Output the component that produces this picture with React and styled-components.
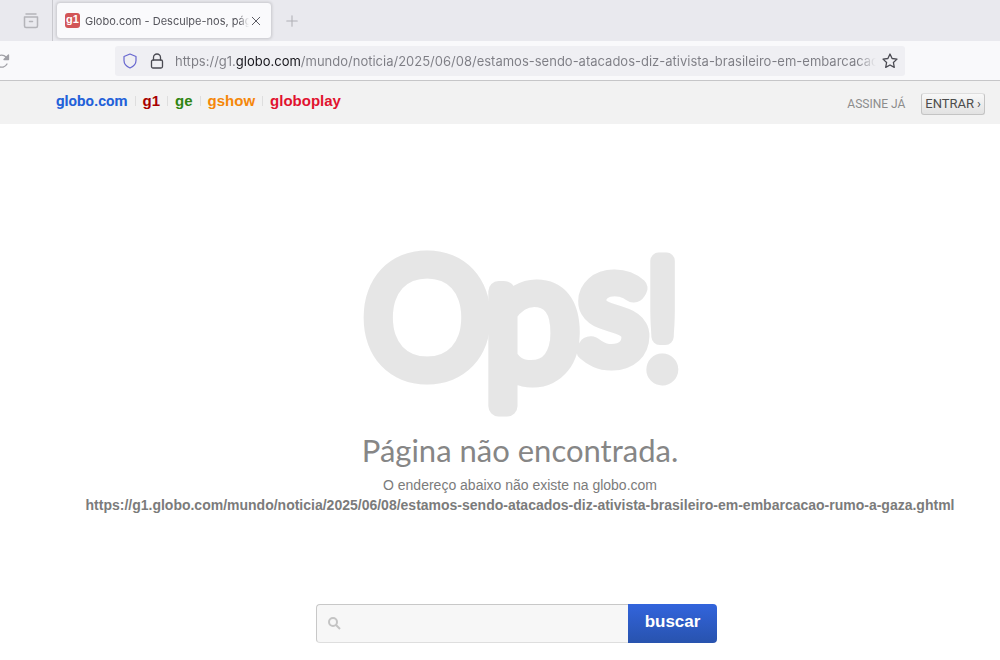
import React, { useState } from "react";
import styled, { createGlobalStyle } from "styled-components";

const GlobalStyle = createGlobalStyle`
  * {
    box-sizing: border-box;
  }
  body {
    margin: 0;
    background: #fff;
    font-family: "Liberation Sans", Arial, sans-serif;
  }
  h1, p {
    margin: 0;
  }
  svg {
    display: block;
    flex-shrink: 0;
    overflow: visible;
  }
`;

const TabStrip = styled.div`
  display: flex;
  align-items: stretch;
  height: 41px;
  background: #e9e9ee;
`;

const IconButton = styled.button`
  display: flex;
  align-items: center;
  justify-content: center;
  flex-shrink: 0;
  width: ${({ $width }) => $width || 24}px;
  padding: 0;
  border: none;
  background: none;
  color: ${({ $color }) => $color || "#4a4a52"};
`;

const RecentTabs = styled.div`
  display: flex;
  justify-content: flex-end;
  width: 53px;
  padding-right: 9px;
  border-right: 1px solid #c9c9ce;
`;

const Tab = styled.div`
  display: flex;
  align-items: center;
  width: 216px;
  height: 37px;
  margin: 2px 8px 0 3px;
  padding: 0 8px;
  background: #fafafc;
  border: 1px solid #d3d3d8;
  border-radius: 4px;
  box-shadow: 0 0 3px rgba(0, 0, 0, 0.15);
`;

const Favicon = styled.span`
  width: 15px;
  height: 15px;
  flex-shrink: 0;
  border-radius: 3px;
  background: #d25557;
  color: #fff;
  font: bold 11px/13px "Liberation Sans", Arial, sans-serif;
  text-align: center;
`;

const TabTitle = styled.span`
  flex: 1;
  margin-left: 5px;
  overflow: hidden;
  white-space: nowrap;
  color: #55555c;
  font: 11px/16px Inter, sans-serif;
  mask-image: linear-gradient(to left, transparent, #000 10px);
`;

const Toolbar = styled.div`
  display: flex;
  align-items: center;
  height: 40px;
  padding-right: 95px;
  background: #f9f9fb;
  border-bottom: 1px solid #c6c6c8;
`;

const ReloadWrap = styled.div`
  display: flex;
  width: 115px;
  overflow: hidden;
`;

const AddressBar = styled.div`
  display: flex;
  align-items: center;
  flex: 1;
  height: 30px;
  padding: 0 3px;
  border-radius: 3px;
  background: #efeff3;
`;

// the host is darker than the rest of the address, the end fades out
const AddressInput = styled.input`
  flex: 1;
  min-width: 0;
  height: 24px;
  margin: 0 2px 0 3px;
  padding: 0;
  border: none;
  outline: none;
  font: 13px/24px Inter, sans-serif;
  color: transparent;
  background: linear-gradient(
    to right,
    #7d7d84 61px,
    #15141a 61px,
    #15141a 125px,
    #7d7d84 125px,
    #7d7d84 calc(100% - 18px),
    transparent
  );
  background-clip: text;
  -webkit-background-clip: text;
`;

const Header = styled.header`
  display: flex;
  align-items: center;
  justify-content: space-between;
  height: 43px;
  padding: 0 15px 0 56px;
  background: #f2f2f2;
`;

const Products = styled.nav`
  display: flex;
  align-items: center;
  padding-bottom: 4px;
`;

const ProductLink = styled.a`
  padding: 0 7px;
  border-left: 1px solid #dedede;
  color: ${({ $color }) => $color};
  font-size: 15px;
  font-weight: bold;
  line-height: 10px;
  text-decoration: none;
  &:first-child {
    padding-left: 0;
    border-left: none;
    font-family: Roboto, sans-serif;
  }
`;

const Account = styled.div`
  display: flex;
  align-items: center;
  gap: 16px;
  padding-top: 3px;
  font: 12px/20px Roboto, sans-serif;
`;

const SubscribeLink = styled.a`
  color: #8c8c8c;
  text-decoration: none;
`;

const LoginButton = styled.button`
  display: flex;
  align-items: center;
  gap: 3px;
  height: 22px;
  padding: 0 3px;
  border: 1px solid #c4c4c4;
  border-top-color: #dedede;
  border-radius: 3px;
  background: linear-gradient(#f8f8f8, #e2e2e2);
  color: #4c4c4c;
  font: 13px/20px Roboto, sans-serif;
`;

const Main = styled.main`
  display: flex;
  flex-direction: column;
  align-items: center;
  padding: 120px 0 16px 40px;
  color: #7b7b7b;
`;

const OpsText = styled.text`
  font-family: Lato, sans-serif;
  font-size: ${({ $size }) => $size}px;
  font-weight: 300;
  fill: #e6e6e6;
  stroke: #e6e6e6;
  stroke-width: ${({ $stroke }) => $stroke || 21}px;
  stroke-linejoin: round;
`;

const Title = styled.h1`
  margin-top: 2px;
  color: #868686;
  font: 400 31px/40px Lato, sans-serif;
`;

const Message = styled.p`
  margin-top: 5px;
  font-size: 14px;
  line-height: 20px;
`;

const MissingAddress = styled.p`
  font-size: 14px;
  font-weight: bold;
  line-height: 20px;
  white-space: nowrap;
`;

const SearchForm = styled.form`
  display: flex;
  width: 401px;
  height: 39px;
  margin: 89px 7px 0 0;
`;

const SearchBox = styled.label`
  display: flex;
  align-items: center;
  flex: 1;
  gap: 8px;
  padding: 0 10px;
  border: 1px solid #c8c8c8;
  border-right: none;
  border-bottom-color: #dedede;
  border-radius: 4px 0 0 4px;
  background: #f7f7f7;
`;

const SearchInput = styled.input`
  flex: 1;
  min-width: 0;
  border: none;
  outline: none;
  background: none;
  font-size: 16px;
`;

const SearchButton = styled.button`
  width: 89px;
  padding: 0 0 3px;
  border: none;
  border-radius: 0 4px 4px 0;
  background: linear-gradient(#3264dc, #2853ae);
  color: #fff;
  font: bold 17px/20px "Liberation Sans", Arial, sans-serif;
`;

const PATH =
  "https://g1.globo.com/mundo/noticia/2025/06/08/estamos-sendo-atacados-diz-ativista-brasileiro-em-embarcacao-rumo-a-gaza.ghtml";

const PRODUCTS = [
  { name: "globo.com", color: "#2361d9" },
  { name: "g1", color: "#a80000" },
  { name: "ge", color: "#2f8512" },
  { name: "gshow", color: "#f5870a" },
  { name: "globoplay", color: "#e1122f" },
];

const Icon = ({ size, width = 1.2, children }) => (
  <svg
    width={size}
    height={size}
    viewBox="0 0 16 16"
    fill="none"
    stroke="currentColor"
    strokeWidth={width}
    strokeLinecap="round"
    strokeLinejoin="round"
    aria-hidden="true"
  >
    {children}
  </svg>
);

const Browser = () => {
  const [address, setAddress] = useState(PATH);

  return (
    <>
      <TabStrip>
        <RecentTabs>
          <IconButton aria-label="Abas recentes" $color="#b4b4b9">
            <Icon size={16} width={1.5}>
              <path d="M3 1h10M1.500 4h13v9a1.500 1.500 0 0 1-1.500 1.500H3A1.500 1.500 0 0 1 1.500 13zM6.500 8.500h3" />
            </Icon>
          </IconButton>
        </RecentTabs>
        <Tab>
          <Favicon>g1</Favicon>
          <TabTitle>Globo.com - Desculpe-nos, pág</TabTitle>
          <IconButton aria-label="Fechar aba" $width={14}>
            <Icon size={12}>
              <path d="M3 3l10 10M13 3L3 13" />
            </Icon>
          </IconButton>
        </Tab>
        <IconButton aria-label="Nova aba" $color="#b0b0b5">
          <Icon size={14}>
            <path d="M8 2v12M2 8h12" />
          </Icon>
        </IconButton>
      </TabStrip>
      <Toolbar>
        <ReloadWrap>
          <IconButton aria-label="Recarregar" $width={4} $color="#a0a0a6">
            <Icon size={16} width={1.3}>
              <path d="M13 11A6 6 0 1 1 12 4L14 6" />
              <path d="M14.500 2v4.500H10z" fill="currentColor" />
            </Icon>
          </IconButton>
        </ReloadWrap>
        <AddressBar>
          <IconButton aria-label="Proteção" $color="#6766cf">
            <Icon size={16}>
              <path d="M8 1l6 2.500v4C14 11 11.500 13.500 8 15 4.500 13.500 2 11 2 7.500v-4z" />
            </Icon>
          </IconButton>
          <IconButton aria-label="Conexão segura" $width={30}>
            <Icon size={16} width={1.3}>
              <rect x="2.500" y="7" width="11" height="8" rx="1.500" />
              <path d="M4.500 7V4.500a3.500 3.500 0 0 1 7 0V7" />
            </Icon>
          </IconButton>
          <AddressInput
            aria-label="Endereço"
            value={address}
            onChange={(e) => setAddress(e.target.value)}
          />
          <IconButton aria-label="Favoritar">
            <Icon size={16} width={1.3}>
              <path d="M8 1l2.100 4.500 4.900.6-3.600 3.400.9 4.900L8 12l-4.300 2.400.9-4.900L1 6.100l4.900-.6z" />
            </Icon>
          </IconButton>
        </AddressBar>
      </Toolbar>
    </>
  );
};

const App = () => {
  return (
    <>
      <GlobalStyle />
      <Browser />
      <Header>
        <Products>
          {PRODUCTS.map(({ name, color }) => (
            <ProductLink key={name} href="#" $color={color}>
              {name}
            </ProductLink>
          ))}
        </Products>
        <Account>
          <SubscribeLink href="#">ASSINE JÁ</SubscribeLink>
          <LoginButton>
            ENTRAR <span>›</span>
          </LoginButton>
        </Account>
      </Header>
      <Main>
        <svg width="320" height="184" viewBox="0 0 320 184">
          <OpsText $size={157} x="5" y="129">
            O
          </OpsText>
          <OpsText $size={169} x="125" y="132">
            p
          </OpsText>
          <OpsText $size={156} x="220" y="115">
            s
          </OpsText>
          <OpsText $size={161} $stroke={17} x="282" y="132">
            !
          </OpsText>
        </svg>
        <Title>Página não encontrada.</Title>
        <Message>O endereço abaixo não existe na globo.com</Message>
        <MissingAddress>{PATH}</MissingAddress>
        <SearchForm onSubmit={(e) => e.preventDefault()}>
          <SearchBox>
            <svg
              width="15"
              height="15"
              viewBox="0 0 15 15"
              fill="none"
              stroke="#c4c4c4"
              strokeWidth="2"
            >
              <circle cx="6" cy="6" r="4" />
              <path d="M9 9l4 4" />
            </svg>
            <SearchInput type="text" aria-label="Buscar" />
          </SearchBox>
          <SearchButton type="submit">buscar</SearchButton>
        </SearchForm>
      </Main>
    </>
  );
};

export default App;
